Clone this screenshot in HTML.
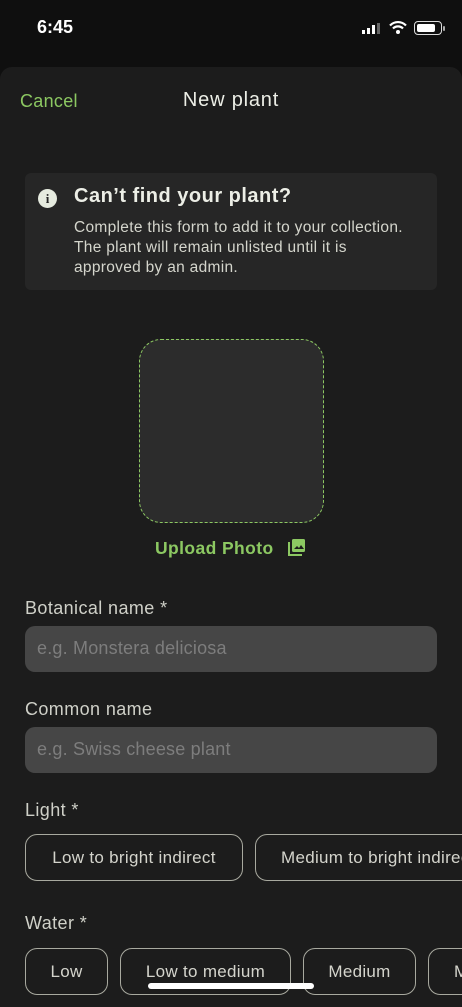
<!DOCTYPE html>
<html><head><meta charset="utf-8">
<style>
*{margin:0;padding:0;box-sizing:border-box}
html,body{width:462px;height:1000px;overflow:hidden;background:#0f0f0f;font-family:"Liberation Sans",sans-serif}
.abs{position:absolute}
.sheet{position:absolute;left:0;top:67px;width:462px;height:940px;background:#1c1c1c;border-radius:12px 12px 0 0}
.lbl{position:absolute;left:25px;color:#cfd0c8;font-size:18px;letter-spacing:0.4px}
.inp{position:absolute;left:25px;width:412px;height:46px;border-radius:10px;background:#464646;color:#7d7d7d;font-size:18px;padding:12px 12px;letter-spacing:0.2px}
.chip{position:absolute;height:47px;border:1.5px solid #a8a99f;border-radius:12px;color:#d4d4cc;font-size:17px;letter-spacing:0.3px;display:flex;align-items:center;justify-content:center;white-space:nowrap;overflow:hidden}
</style></head><body>
<div class="abs" style="left:37px;top:17px;color:#fff;font-size:18px;font-weight:bold">6:45</div>
<svg class="abs" style="left:361px;top:22px" width="22" height="13"><rect x="1" y="8" width="3" height="4" fill="#fff"/><rect x="6" y="6" width="3" height="6" fill="#fff"/><rect x="11" y="3" width="3" height="9" fill="#fff"/><rect x="16" y="1" width="3" height="11" fill="#666"/></svg>
<svg class="abs" style="left:389px;top:20px" width="18" height="15" viewBox="0 0 18 15"><path d="M1 5.5a11 11 0 0 1 16 0" stroke="#fff" stroke-width="2.2" fill="none"/><path d="M4 8.5a7 7 0 0 1 10 0" stroke="#fff" stroke-width="2.2" fill="none"/><circle cx="9" cy="12" r="2" fill="#fff"/></svg>
<div class="abs" style="left:414px;top:21px;width:28px;height:14px;border:1.5px solid #ddd;border-radius:4px"><div style="margin:1.5px;width:18px;height:8px;background:#fff;border-radius:2px"></div></div>
<div class="abs" style="left:443px;top:26px;width:2px;height:5px;background:#aaa;border-radius:1px"></div>
<div class="sheet"></div>
<div class="abs" style="left:20px;top:91px;color:#8cc862;font-size:18px;letter-spacing:0.3px">Cancel</div>
<div class="abs" style="left:0;width:462px;top:89px;text-align:center;color:#eceee6;font-size:20px;letter-spacing:0.8px">New plant</div>
<div class="abs" style="left:25px;top:173px;width:412px;height:117px;background:#262626;border-radius:6px"></div>
<div class="abs" style="left:38px;top:189px;width:19px;height:19px;border-radius:50%;background:#e6ebdf;color:#262626;font-size:13px;font-weight:bold;text-align:center;line-height:19px;font-family:'Liberation Serif',serif">i</div>
<div class="abs" style="left:74px;top:185px;color:#eceee6;font-size:20px;font-weight:bold;letter-spacing:0.5px">Can’t find your plant?</div>
<div class="abs" style="left:74px;top:218px;color:#d4d5cc;font-size:15.5px;line-height:20px;width:380px;letter-spacing:0.3px;white-space:nowrap">Complete this form to add it to your collection.<br>The plant will remain unlisted until it is<br>approved by an admin.</div>
<div class="abs" style="left:139px;top:339px;width:185px;height:184px;border:1.5px dashed #8cc862;border-radius:22px;background:#2c2c2c"></div>
<div class="abs" style="left:155px;top:538px;color:#8cc862;font-size:17.5px;font-weight:bold;letter-spacing:0.4px">Upload Photo</div>
<svg class="abs" style="left:288px;top:539px" width="17" height="17" viewBox="0 0 17 17"><rect x="4" y="0" width="13" height="13" rx="1.5" fill="#8cc862"/><path d="M6 10l3-3 2 2 2-3 3 4z" fill="#1c1c1c"/><path d="M1 3v13h13" stroke="#8cc862" stroke-width="2" fill="none"/></svg>
<div class="lbl" style="top:598px">Botanical name *</div>
<div class="inp" style="top:626px">e.g. Monstera deliciosa</div>
<div class="lbl" style="top:699px">Common name</div>
<div class="inp" style="top:727px">e.g. Swiss cheese plant</div>
<div class="lbl" style="top:800px">Light *</div>
<div class="chip" style="left:25px;top:834px;width:218px">Low to bright indirect</div>
<div class="chip" style="left:255px;top:834px;width:230px;justify-content:flex-start;padding-left:25px">Medium to bright indirect</div>
<div class="lbl" style="top:913px">Water *</div>
<div class="chip" style="left:25px;top:948px;width:83px">Low</div>
<div class="chip" style="left:120px;top:948px;width:171px">Low to medium</div>
<div class="chip" style="left:303px;top:948px;width:113px">Medium</div>
<div class="chip" style="left:428px;top:948px;width:60px;justify-content:flex-start;padding-left:25px">M</div>
<div class="abs" style="left:148px;top:983px;width:166px;height:6px;border-radius:3px;background:#fff"></div>
</body></html>
